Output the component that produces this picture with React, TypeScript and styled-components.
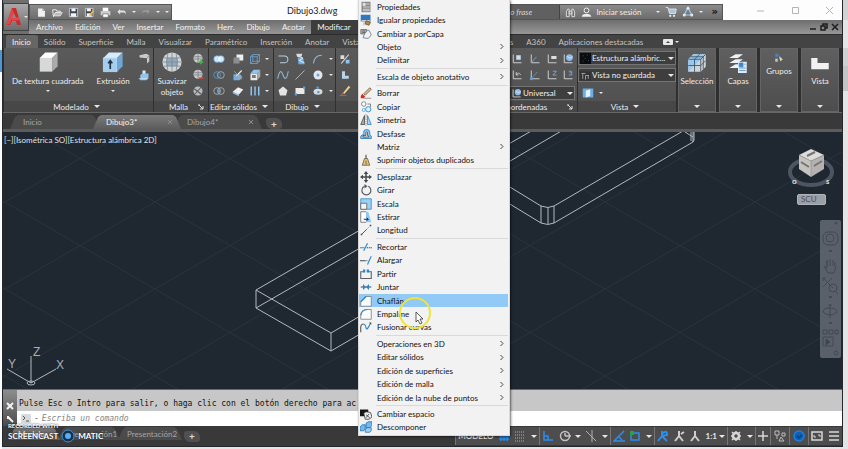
import React, { ReactNode } from "react";
import styled, { createGlobalStyle, css } from "styled-components";

const GlobalStyle = createGlobalStyle`
  * { box-sizing: border-box; }
  html, body, #root { height: 100%; }
  body {
    margin: 0;
    overflow: hidden;
    background: #ececec;
    font-family: Lato, "Open Sans", sans-serif;
    font-size: 8px;
    line-height: 10px;
    color: #dcdcdc;
  }
  button, input, select {
    font: inherit;
    color: inherit;
    margin: 0;
    padding: 0;
    border: 0;
    background: none;
  }
`;

/* ---------- icons ---------- */

const B = "#8cc4f2";
const W = "#e9ecef";
const K = "#3f4144";

const glyphs: Record<string, ReactNode> = {
  newFile: <><path d="M3 2h7l3 3v9H3z" fill="#f2f2f2" /><path d="M10 2v3h3" fill="none" stroke="#777" /></>,
  open: <><path d="M1 4h5l1 2h5v2H5l-3 6z" fill="none" stroke={W} strokeWidth="1.4" /><path d="M5 8h10l-3 5H2z" fill="#bbb" stroke={W} /></>,
  save: <><path d="M2 2h12v12H2z" fill="#3c4650" stroke={W} /><path d="M5 2h6v4H5zM4 9h8v5H4z" fill="#f4f4f4" /></>,
  saveAs: <><path d="M2 2h11v12H2z" fill="#3c4650" stroke={W} /><path d="M4 2h6v4H4zM4 9h7v5H4z" fill="#f4f4f4" /><path d="M8 11l5-7 2 2-5 6-3 1z" fill="#e9b44c" /></>,
  plot: <><path d="M4 1h8v5H4z" fill="#fff" /><path d="M1 6h14v6H1z" fill="#cfd2d4" /><path d="M4 10h8v5H4z" fill="#fff" stroke="#666" /></>,
  undo: <path d="M6 3L2 7l4 4V8h5c2 0 3 1 3 4 1-5-1-7-4-7H6z" fill="#e2e2e2" />,
  redo: <path d="M10 3l4 4-4 4V8H5c-2 0-3 1-3 4-1-5 1-7 4-7h4z" fill="#999" />,
  box: <><path d="M2 5l4-4h9l-4 4z" fill="#fff" /><path d="M2 5h9v10H2z" fill="#d7d8d9" /><path d="M11 5l4-4v10l-4 4z" fill="#a9abad" /></>,
  extrude: <><path d="M1 5l4-4h10l-4 4z" fill="#d8ebfa" /><path d="M1 5h10v10H1z" fill="#a4cdee" stroke="#cfe6f8" strokeWidth=".5" /><path d="M11 5l4-4v10l-4 4z" fill="#6ea6d4" /><path d="M6 13V7M4.500 9L6 7l1.500 2" fill="none" stroke="#1e3446" strokeWidth="1.200" /></>,
  polysolid: <><path d="M2 3l9-2 4 2v8l-3 3V7L2 6z" fill="#c8cacc" /><path d="M12 7l3-4" stroke="#777" /></>,
  presspull: <><path d="M6 2h4v5H6z" fill="#e8e8e8" /><path d="M3 8l3-2h8v6l-3 3H3z" fill={B} /><path d="M1 13h12" stroke="#e8e8e8" /></>,
  globe: <><circle cx="8" cy="8" r="7" fill="#d3d6d9" /><path d="M4 5h8v6H4z" fill="#8fa9be" /><path d="M1 8h14M2 5h12M2 11h12M8 1v14M5 2q-2 6 0 12M11 2q2 6 0 12" stroke="#7d8890" strokeWidth=".6" fill="none" /></>,
  meshAdd: <><circle cx="8" cy="7" r="6" fill="#c9cccf" /><path d="M2 5h12M2 8h12M8 1v12" stroke="#777" /><path d="M9 12h6M12 9v6" stroke="#43b649" strokeWidth="2" /></>,
  meshDel: <><circle cx="8" cy="7" r="6" fill="#c9cccf" /><path d="M2 5h12M2 8h12M8 1v12" stroke="#777" /><path d="M9 12h6" stroke="#e2483d" strokeWidth="2" /></>,
  meshEdit: <><circle cx="8" cy="8" r="6" fill="#b9bcbf" /><path d="M3 13L13 2M3 5l9 7" stroke="#595959" strokeWidth="1.400" /></>,
  union: <><circle cx="5.500" cy="8" r="4.500" fill="#d4e9fa" stroke="#5aa0dc" /><circle cx="10.500" cy="8" r="4.500" fill="#d4e9fa" stroke="#5aa0dc" /><path d="M6 5h4v6H6z" fill="#eef6fd" /></>,
  subtract: <><circle cx="10.500" cy="8" r="4.500" fill="none" stroke="#b8bcc0" /><circle cx="5.500" cy="8" r="4.500" fill="none" stroke="#5aa0dc" /><path d="M7 4a5 5 0 000 8" fill="#5aa0dc" /></>,
  intersect: <><circle cx="5.500" cy="8" r="4.500" fill="none" stroke="#b8bcc0" /><circle cx="10.500" cy="8" r="4.500" fill="none" stroke="#b8bcc0" /><path d="M8 4.500q3 3.500 0 7q-3-3.500 0-7" fill="#5aa0dc" /></>,
  sheets: <><path d="M6 2h9v8H6z" fill="#f0f0f0" /><path d="M2 6h8v8H2z" fill="#8b8e91" /></>,
  slice: <><path d="M2 7h9l3 4-4 4H2z" fill="#79aede" /><path d="M13 2L6 9" stroke="#eee" strokeWidth="1.500" /><path d="M3 3l10 11" stroke="#d6b36a" /></>,
  thick: <><path d="M1 9l7-6 7 3-6 7z" fill="#eee" /><path d="M1 9l8 4v2l-8-4z" fill={B} /></>,
  wireBox: <path d="M2 5h9v9H2zM5 2h9v9M2 5l3-3M11 5l3-3M11 14l3-3M5 2v9h9M2 14l3-3" fill="none" stroke="#6ea9dd" />,
  faceBox: <><path d="M2 6h9v9H2z" fill="#e9e9e9" /><path d="M2 6l4-5h9l-4 5z" fill={B} /><path d="M4 8h5v4H4z" fill="#777" /><path d="M11 6l4-5v9l-4 5z" fill="#aaa" /></>,
  bars: <path d="M3 2v12M8 2v12M13 2v12" stroke={B} strokeWidth="2" />,
  polyline: <path d="M2 4h8a4 4 0 010 9H4" fill="none" stroke="#b9cfe2" strokeWidth="1.400" />,
  helix: <><path d="M3 1h8l-1 4H4z" fill="#dcdcdc" /><path d="M5 6h7l2 9H6z" fill="#74aee0" /><path d="M5 4l7 3-5 3 7 3" fill="none" stroke="#fff" /></>,
  arc: <path d="M2 14Q3 3 13 3" fill="none" stroke="#8fb9de" strokeWidth="1.400" />,
  spline: <path d="M1 13Q4-3 8 8T15 3" fill="none" stroke="#8fb9de" strokeWidth="1.400" />,
  line: <path d="M2 14L14 2" stroke="#b8bcc0" strokeWidth="1.200" />,
  circle: <><circle cx="8" cy="8" r="6" fill="#e4e7ea" /><circle cx="8" cy="8" r="2" fill="#6ea9dd" /></>,
  polygon: <path d="M8 2l6 5-2 7H4L2 7z" fill="#e4e4e4" />,
  rect: <><path d="M2 4h12v8H2z" fill="#e9e9e9" /><path d="M1 11h3v3H1zM12 2h3v3h-3z" fill="#5aa0dc" /></>,
  ellipse: <><ellipse cx="8" cy="9" rx="6" ry="4" fill="#d8dadc" /><path d="M6 2h3v3H6zM7 8h3v3H7z" fill="#5aa0dc" /></>,
  mod1: <><path d="M3 14L13 2" stroke="#ddd" strokeWidth="1.500" /><path d="M2 3h5v5H2z" fill="#ddd" /><path d="M9 9h5v5H9z" fill={B} /></>,
  mod2: <path d="M4 3h4v6h5v4H4z" fill="#b9d3ea" />,
  pencil: <><path d="M5 11L13 1l2 2-8 9z" fill="#efd28a" /><path d="M1 14h9M3 13l3-3" stroke="#e2483d" strokeWidth="1.500" /></>,
  ucs1: <><path d="M3 2v11h11" fill="none" stroke="#cfcfcf" strokeWidth="1.300" /><path d="M7 3h6v6H7z" fill="#c9dff2" /></>,
  ucs2: <><path d="M3 2v11h11" fill="none" stroke="#cfcfcf" strokeWidth="1.300" /><path d="M3 13l7-8" stroke="#5aa0dc" strokeWidth="1.300" /></>,
  ucs3: <><path d="M3 2v11h11" fill="none" stroke="#cfcfcf" strokeWidth="1.300" /><path d="M7 4h7v4H7z" fill="#ddd" /></>,
  ucs4: <><path d="M3 2v11h11" fill="none" stroke="#cfcfcf" strokeWidth="1.300" /><circle cx="10" cy="6" r="4.500" fill="#8fbde6" /><path d="M7 4l3 3 4-2" stroke="#eef" fill="none" /></>,
  ucs5: <><path d="M3 2v11h11" fill="none" stroke="#cfcfcf" strokeWidth="1.300" /><path d="M7 8q3-5 6 0M7 4v4h3" fill="none" stroke="#ddd" /></>,
  ucsPoint: <><path d="M3 2v11h11" fill="none" stroke="#cfcfcf" strokeWidth="1.300" /><path d="M3 13l8-9" stroke="#5aa0dc" /><circle cx="3" cy="13" r="2" fill="#5aa0dc" /></>,
  ucsZ: <><path d="M3 2v11h11" fill="none" stroke="#cfcfcf" strokeWidth="1.300" /><path d="M9 3h5l-5 5h5" fill="none" stroke="#6ea9dd" strokeWidth="1.200" /></>,
  ucs6: <><path d="M3 2v11h11" fill="none" stroke="#cfcfcf" strokeWidth="1.300" /><path d="M9 3h4v5H9M10 5h3" fill="none" stroke="#6ea9dd" strokeWidth="1.200" /></>,
  stars: <><path d="M0 0h16v16H0z" fill="#0c0d10" /><path d="M4 4h1M10 3h1M7 8h1M12 11h1M4 12h1" stroke="#6d83a8" /></>,
  viewport: <><path d="M0 2h16v13H0z" fill="#333" /><path d="M2 5h6M4 5v8M8 8h5M8 8v6M12 8v5" stroke="#c8c8c8" fill="none" /></>,
  views: <><path d="M1 2h14v12H1z" fill="#68aee8" /><path d="M5 5l6-2v9l-6 2z" fill="#e6f2fc" /></>,
  selection: <><path d="M1 5l4-4h10v10l-4 4H1z" fill="#d2d5d8" /><path d="M1 5l4-4h10L1 15z" fill="#98c7ee" /><path d="M1 5h10v10M11 5l4-4M6 5v10M1 10h10l4-4M6 5l4-4M13 3v10M3 3h10" fill="none" stroke="#3c566c" strokeWidth=".7" /></>,
  layers: <><path d="M1 4l5-3h6L8 4zM1 8l5-3h6L8 8zM1 12l5-3h3v3z" fill="#f0f0f0" /><path d="M8 7h7v9H8z" fill="#dfeaf4" /><path d="M9 8h3v3H9zM9 12h5M9 14h5M13 9h1" fill="#3f86c8" stroke="#3f86c8" strokeWidth=".6" /></>,
  groups: <><path d="M2 1h5v5H2z" fill="#547fb5" /><path d="M2 9h4v5H2z" fill="#bfc6cc" /><path d="M7 4q7 1 4 10" fill="none" stroke="#3f7fc0" strokeWidth="1.500" /><path d="M8 5l6 5-4 3z" fill="#e8d79a" /></>,
  base: <path d="M1 4h5v4h9v5H1z" fill="#f1f1f1" />,
  binoculars: <path d="M2 14V7l2-4h2v11zM10 14V3h2l2 4v7zM6 6h4v4H6z" fill="#6c6c6c" stroke="#e4e4e4" strokeWidth="1.300" />,
  user: <><circle cx="8" cy="5" r="3.500" fill="#777" stroke="#f2f2f2" strokeWidth="1.400" /><path d="M1 14q1-4 5-4h4q4 0 5 4z" fill="#eee" /></>,
  cart: <><path d="M1 2h3l2 8h8l1-6H5" fill="#a9c6dd" stroke="#e4e4e4" strokeWidth="1.200" /><circle cx="7" cy="13" r="1.500" fill="#eee" /><circle cx="12" cy="13" r="1.500" fill="#eee" /></>,
  triangle: <><path d="M8 2l5 10H3z" fill="none" stroke="#a7cbe8" strokeWidth="1.500" /><circle cx="8" cy="3" r="2" fill="#dcebf7" /><circle cx="3" cy="12" r="2" fill="#dcebf7" /><circle cx="13" cy="12" r="2" fill="#dcebf7" /></>,
  props: <><path d="M2 1h12v14H2z" fill="#888" /><path d="M4 3h3v3H4zM8 4h5M4 8h9M4 11h9M4 13h9" stroke="#e8e8e8" fill="#ddd" /></>,
  matchProps: <><path d="M1 1h13v9H1z" fill="#2f78bd" /><path d="M2 8h11v2H2zM4 11h7v4H4z" fill="#c9cdd1" /><path d="M8 9l6 2-2 4-5-2z" fill="#b88a4f" stroke="#6b4a22" /></>,
  byLayer: <><path d="M1 2h8v6H1z" fill="#a9adb0" stroke="#666" /><path d="M10 3h2l3 6-4 5-7-1 2-5z" fill="#f2f2f2" stroke="#5c6e80" /><path d="M3 4h4M3 6h4" stroke="#555" /></>,
  erase: <><path d="M5 9L13 1l2 2-8 8z" fill="#d9c290" stroke="#61492a" /><path d="M3 9l4 4-2 2H1v-3z" fill="#cf2f28" /><path d="M5 15h10" stroke="#777" /></>,
  copy: <><circle cx="5" cy="4" r="3" fill="#fff" stroke="#66696d" /><path d="M10 4h4v4" fill="none" stroke="#66696d" /><circle cx="11" cy="11" r="3.500" fill="#dceefb" stroke="#3d96da" strokeWidth="1.300" /><circle cx="5" cy="12" r="2" fill="#fff" stroke="#3d96da" /></>,
  mirror: <><path d="M6 2v12H1z" fill="#a9adb1" stroke={K} /><path d="M10 2v12h5z" fill="#a7d4f5" stroke="#2a7fc6" /><path d="M8 0v16" stroke="#777" strokeDasharray="2 1" /></>,
  offset: <><path d="M1 14q-1-5 4-5V5q0-3 4-3t4 4v3q3 1 2 5z" fill="#8cc8f4" stroke="#1c6db3" /><path d="M4 12h8q0-2-2-2V6q0-1-1-1t-1 1v4H4z" fill="#f5f5f5" stroke="#39444d" /></>,
  overkill: <><path d="M7 1h2v6H7z" fill="#777" /><path d="M6 6h4l3 9H3z" fill="#e2c270" stroke="#5c5347" /><path d="M8 9v5" stroke="#5c5347" /></>,
  move: <path d="M8 0l3 4H9v3h3V5l4 3-4 3V9H9v3h2l-3 4-3-4h2V9H4v2L0 8l4-3v2h3V4H5z" fill="#46494d" />,
  rotate: <><path d="M11 3a6 6 0 11-5 0" fill="none" stroke="#55595d" strokeWidth="1.500" /><path d="M6 0l4 3-4 3z" fill="#55595d" /></>,
  scale: <><path d="M1 1h14v14H1z" fill="#9ed0f4" stroke="#2d84c9" /><path d="M1 7h8v8H1z" fill="#f5f5f5" stroke="#555" /></>,
  stretch: <><path d="M8 1h3l4 14H8z" fill="#8fc8f3" /><path d="M8 1H1v14h7" fill="#fff" stroke="#555" /><path d="M5 11h6M9 9l2 2-2 2" fill="none" stroke="#222" strokeWidth="1.300" /></>,
  lengthen: <><path d="M2 14l7-7" stroke={K} strokeWidth="1.200" /><path d="M9 7l5-5" stroke="#777" strokeDasharray="1.500 1.500" /><path d="M1 13h2v2H1zM13 1h2v2h-2z" fill={K} /></>,
  trim: <><path d="M0 9h6" stroke="#2d84c9" strokeWidth="1.300" /><path d="M9 9h7" stroke={K} strokeDasharray="2 1" strokeWidth="1.300" /><path d="M5 13l5-10" stroke="#2d84c9" strokeWidth="1.400" /></>,
  extend: <><path d="M0 9h7" stroke={K} strokeWidth="1.300" /><path d="M7 9h4" stroke={K} strokeDasharray="2 1" /><path d="M10 14l5-11" stroke="#2d84c9" strokeWidth="1.400" /></>,
  breakIcon: <><path d="M5 5H1v9h14V5h-4" fill="none" stroke="#5b5f63" strokeWidth="1.400" /><path d="M4 2h3v4H4zM9 2h3v4H9z" fill="#2d84c9" /></>,
  join: <><path d="M1 8h14" stroke={K} strokeWidth="1.300" /><path d="M4 4l4 4-4 4zM12 4L8 8l4 4z" fill="#2d84c9" /></>,
  chamfer: <><path d="M1 15V9l7-7h7v13z" fill="#fafafa" stroke="#707478" /><path d="M1 9l7-7" stroke="#2d84c9" strokeWidth="1.600" /></>,
  fillet: <><path d="M1 15V10q1-8 9-8h5v13z" fill="#fafafa" stroke="#707478" /><path d="M1 10q1-8 9-8" fill="none" stroke="#2d84c9" strokeWidth="1.500" /></>,
  blend: <><path d="M1 15V8q0-4 3-4" fill="none" stroke={K} strokeWidth="1.300" /><path d="M4 4q3 0 4 5t6-6" fill="none" stroke="#2d84c9" strokeWidth="1.500" /><path d="M12 2h3v3" fill={K} /></>,
  space: <><path d="M0 2h11v9H0z" fill="#161616" /><path d="M5 7l3-2 6 1 2 6-4 3H7z" fill="#eee" stroke="#333" /><path d="M8 9l5 4M12 8l-4 5" stroke="#333" /></>,
  explode: <><path d="M0 8l3-3h4v5l-2 3H0zM8 3l3-2h5v5l-3 3H8z" fill="#74b8ec" stroke="#1c6db3" /><path d="M7 11l3-2h5v4l-2 2H7z" fill="#9dd0f5" stroke="#1c6db3" /></>,
};

const IconSvg = styled.svg<{ $s: number }>`
  display: block;
  flex: none;
  width: ${(p) => p.$s}px;
  height: ${(p) => p.$s}px;
`;
const Icon = ({ name, size = 11 }: { name: string; size?: number }) => (
  <IconSvg $s={size} viewBox="0 0 16 16" aria-hidden="true">{glyphs[name]}</IconSvg>
);

const Caret = styled.i`
  flex: none;
  width: 0;
  height: 0;
  border: 3px solid transparent;
  border-top-color: #e8e8e8;
  border-bottom-width: 0;
`;
const SmallCaret = styled(Caret)`
  border-width: 2px 2px 0;
`;

/* ---------- frame ---------- */

const Desktop = styled.div`
  display: flex;
  height: 100vh;
  padding: 0 5px 2px 2px;
  background: linear-gradient(#fbfbfb 50px, #4f97d4 50px 72px, #fbfbfb 72px) left / 2px 100% no-repeat,
    linear-gradient(#d2d2d2 20px, #e4e4e4 20px 48px, #d0d0d0 48px 66px, #c4c4c4 66px 91px, #e4e4e4 91px);
`;
const Window = styled.main`
  position: relative;
  flex: 1;
  min-width: 0;
  display: flex;
  flex-direction: column;
  border: solid #24272b;
  border-width: 0 1px 1px;
  background: #3a3a3a;
`;

/* ---------- header ---------- */

const Header = styled.header`
  display: grid;
  grid-template-columns: 26px minmax(0, 1fr);
  grid-template-rows: 20px 14px;
  border-bottom: 1px solid #2c2c2c;
  background: #6f6f6f;
`;
const AppButton = styled.button`
  grid-row: 1 / 3;
  display: flex;
  align-items: center;
  justify-content: center;
  gap: 2px;
  margin-top: 3px;
  height: 28px;
  border: 1px solid #444;
  background: linear-gradient(#a9a9a9, #6c6c6c);
`;
const AppLogo = styled.svg`
  width: 17px;
  height: 20px;
`;
const TitleBar = styled.div`
  display: flex;
  align-items: center;
  background: #fdfdfd;
  color: #333;
  padding-top: 4px;
`;
const barFace = css`
  display: flex;
  align-items: center;
  height: 16px;
  background: linear-gradient(#8b8b8b, #6c6c6c);
  color: #ececec;
`;
const QuickAccess = styled.div`
  ${barFace}
  width: 143px;
  gap: 5px;
  padding: 0 4px 0 6px;
  border: 1px solid #555;
`;
const PlainButton = styled.button`
  display: flex;
  align-items: center;
  justify-content: center;
  gap: 2px;
`;
const Title = styled.h1`
  flex: 1;
  margin: 0;
  padding: 0 0 2px 115px;
  font-size: 9px;
  line-height: 10px;
  font-weight: 400;
  color: #222;
`;
const InfoCenter = styled.div`
  ${barFace}
  gap: 5px;
  padding-right: 4px;
  border: 1px solid #555;
`;
const Search = styled.input`
  width: 138px;
  height: 14px;
  padding-right: 27px;
  border-right: 1px solid #444;
  background: #606060;
  font-style: italic;
  text-align: right;
  &::placeholder { color: #d2d2d2; }
`;
const SignIn = styled(PlainButton)`
  gap: 4px;
  padding-right: 9px;
`;
const More = styled(PlainButton)`
  font-family: "DejaVu Sans", sans-serif;
  font-size: 10px;
  font-weight: 700;
  color: #111;
  padding-left: 4px;
`;
const WindowButtons = styled.div`
  display: flex;
  width: 119px;
  padding: 0 8px 4px 33px;
  justify-content: space-between;
`;
const WinIcon = styled.svg`
  display: block;
  width: 9px;
  height: 9px;
  fill: none;
  stroke: #b4b4b4;
`;
const MenuBar = styled.nav`
  display: flex;
  align-items: stretch;
  padding-left: 1px;
  background: linear-gradient(#6e6e6e, #979797);
`;
const MenuButton = styled.button<{ $on?: boolean }>`
  padding: 0 ${(p) => (p.$on ? 40 : 6)}px 0 6px;
  color: #f2f2f2;
  background: ${(p) => (p.$on ? "#3d3d3d" : "none")};
`;
const DocButtons = styled.div`
  display: flex;
  align-items: center;
  gap: 3px;
  margin-left: auto;
  padding-right: 3px;
`;
const DocIcon = styled.svg`
  display: block;
  width: 8px;
  height: 8px;
  fill: none;
  stroke: #1e1e1e;
  stroke-width: 1.5px;
`;

/* ---------- ribbon ---------- */

const RibbonTabs = styled.nav`
  display: flex;
  align-items: stretch;
  height: 13px;
  padding-left: 3px;
  background: #434343;
`;
const RibbonTab = styled.button<{ $on?: boolean }>`
  padding: 0 7px 0 6px;
  white-space: nowrap;
  color: ${(p) => (p.$on ? "#f2f2f2" : "#c4c4c4")};
  background: ${(p) => (p.$on ? "#666" : "none")};
  border-radius: 2px 2px 0 0;
`;
const RibbonToggle = styled(PlainButton)`
  margin-left: 13px;
`;
const ToggleIcon = styled.svg`
  width: 10px;
  height: 6px;
`;
const Ribbon = styled.section`
  display: flex;
  align-items: stretch;
  height: 65px;
  padding: 0 3px 0 1px;
  background: #2f2f2f;
  border-bottom: 1px solid #666;
  gap: 1px;
`;
const Panel = styled.section<{ $w?: number }>`
  ${(p) => (p.$w ? `flex: none; width: ${p.$w}px;` : "flex: 1; min-width: 0;")}
  display: flex;
  flex-direction: column;
  background: linear-gradient(#5a5a5a, #505050);
`;
const PanelBody = styled.div<{ $pad?: string }>`
  flex: 1;
  display: flex;
  align-items: flex-start;
  padding: ${(p) => p.$pad || "3px 0 0"};
`;
const PanelFooter = styled.button<{ $left?: number }>`
  display: flex;
  align-items: center;
  justify-content: ${(p) => (p.$left ? "flex-start" : "center")};
  gap: 5px;
  height: 11px;
  padding: 0 4px 0 ${(p) => p.$left || 0}px;
  background: #474747;
  color: #ececec;
  white-space: nowrap;
`;
const Launcher = styled.svg`
  width: 6px;
  height: 6px;
  margin-left: auto;
  stroke: #e2e2e2;
  fill: none;
`;
const BigButton = styled.button<{ $w: number }>`
  display: flex;
  flex-direction: column;
  align-items: center;
  width: ${(p) => p.$w}px;
  white-space: nowrap;
  color: #ececec;
  line-height: 11px;
  gap: 3px;
`;
const IconGrid = styled.div<{ $cols: string }>`
  display: grid;
  grid-template-columns: ${(p) => p.$cols};
  grid-auto-rows: 16px;
  align-items: center;
  justify-items: center;
`;
const TallPanels = styled.div`
  display: flex;
  gap: 3px;
  padding-left: 1px;
`;
const TallPanel = styled.button`
  width: 38px;
  display: flex;
  flex-direction: column;
  align-items: center;
  gap: 3px;
  padding: 4px 0 3px;
  border: 1px solid #646464;
  background: linear-gradient(#5f5f5f, #4d4d4d);
  color: #ececec;
  & > i { margin-top: auto; }
`;
const Stack = styled.div`
  display: flex;
  flex-direction: column;
  gap: 3px;
  width: 100%;
`;
const Combo = styled.label`
  display: flex;
  align-items: center;
  gap: 1px;
  height: 14px;
  padding: 0 1px;
  border: 1px solid #747474;
  background: #3e3e3e;
  color: #f0f0f0;
`;
const Select = styled.select`
  appearance: none;
  flex: 1;
  min-width: 0;
  outline: 0;
  height: 12px;
`;

/* ---------- file tabs ---------- */

const FileTabs = styled.nav`
  display: flex;
  align-items: flex-end;
  height: 19px;
  padding-left: 7px;
  border-bottom: 3px solid #5c5c5c;
  background: #393939;
`;
const FileTab = styled.button<{ $w: number; $on?: boolean }>`
  display: flex;
  align-items: center;
  justify-content: space-between;
  position: relative;
  z-index: ${(p) => (p.$on ? 1 : 0)};
  width: ${(p) => p.$w}px;
  height: 14px;
  margin-right: -7px;
  padding: 0 8px 0 13px;
  text-align: left;
  color: ${(p) => (p.$on ? "#f4f4f4" : "#a5a5a5")};
  background: ${(p) => (p.$on ? "linear-gradient(#7a7a7a, #5c5c5c)" : "#4b4b4b")};
  clip-path: polygon(0 100%, 5px 15%, 8px 0, calc(100% - 8px) 0, calc(100% - 5px) 15%, 100% 100%);
`;
const CloseMark = styled.svg`
  width: 6px;
  height: 6px;
  stroke: #8d8d8d;
`;
const AddTab = styled.button<{ $gap: number }>`
  width: 16px;
  height: 11px;
  margin-left: ${(p) => p.$gap}px;
  border-radius: 3px 6px;
  background: #505050;
  color: #ddd;
  font-weight: 700;
  font-size: 10px;
  line-height: 10px;
`;

/* ---------- drawing ---------- */

const Viewport = styled.section`
  position: relative;
  flex: 1;
  min-height: 0;
  background: #1f2731;
  overflow: hidden;
`;
const Drawing = styled.svg`
  display: block;
  width: 100%;
  height: 100%;
  font-family: "Liberation Sans", sans-serif;
  font-size: 12px;
`;
const ViewLabel = styled.button`
  position: absolute;
  left: 1px;
  top: 3px;
  color: #e0e2e4;
`;
const ViewCube = styled.svg`
  position: absolute;
  right: 6px;
  top: 14px;
  width: 50px;
  height: 42px;
  font-family: "Open Sans", sans-serif;
  font-size: 6px;
  font-weight: 700;
`;
const ScuButton = styled.button`
  position: absolute;
  right: 16px;
  top: 62px;
  width: 29px;
  height: 11px;
  padding-left: 3px;
  border-radius: 2px;
  border: 1px solid #b0b4ba;
  background: #9a9ea6;
  color: #4c535c;
  font-size: 8px;
  line-height: 9px;
  text-align: left;
`;
const NavBar = styled.nav`
  position: absolute;
  right: 1px;
  top: 88px;
  width: 21px;
  height: 138px;
  border-radius: 2px;
  background: #5a6069;
`;
const NavDrawing = styled.svg`
  width: 21px;
  height: 138px;
  fill: none;
  stroke: #424953;
`;

/* ---------- command line and status ---------- */

const CommandArea = styled.section`
  display: grid;
  grid-template-columns: 14px minmax(0, 1fr);
  border-top: 1px solid #6a6a6a;
  font-family: "DejaVu Sans Mono", monospace;
`;
const Grip = styled.div`
  grid-row: 1 / 3;
  display: flex;
  flex-direction: column;
  align-items: center;
  justify-content: space-between;
  padding: 12px 0 3px;
  background: linear-gradient(#8d8d8d, #4c4c4c);
`;
const GripIcon = styled.svg`
  width: 8px;
  height: 8px;
  fill: none;
  stroke: #f2f2f2;
  stroke-width: 2px;
`;
const History = styled.output`
  height: 21px;
  padding: 9px 2px 0;
  overflow: hidden;
  white-space: nowrap;
  background: #c7c7c7;
  color: #111;
`;
const Prompt = styled.label`
  display: flex;
  align-items: center;
  gap: 3px;
  height: 15px;
  padding-left: 4px;
  background: #fff;
  color: #555;
`;
const PromptIcon = styled.svg`
  width: 10px;
  height: 9px;
  fill: #d8dbde;
  stroke: #555;
`;
const CommandInput = styled.input`
  flex: 1;
  font-style: italic;
  outline: 0;
  &::placeholder { color: #868686; }
`;
const StatusBar = styled.footer`
  display: flex;
  align-items: center;
  height: 20px;
  padding-left: 6px;
  background: #393939;
`;
const LayoutTab = styled(FileTab)`
  padding: 0 0 0 9px;
  margin-right: -2px;
  height: 13px;
  margin-bottom: 5px;
`;
const StatusTools = styled.div`
  display: flex;
  align-items: stretch;
  height: 18px;
  margin-left: auto;
  background: #4d4d4d;
`;
const ToolGroup = styled.div<{ $w: number }>`
  display: flex;
  align-items: center;
  justify-content: space-around;
  width: ${(p) => p.$w}px;
  border-left: 1px solid #757575;
  color: #e6e6e6;
`;
const ModelButton = styled(PlainButton)`
  font-weight: 700;
`;
const ToolSvg = styled.svg<{ $c: string }>`
  display: block;
  width: 12px;
  height: 12px;
  fill: none;
  stroke: ${(p) => p.$c};
  stroke-width: 1.5px;
`;

/* ---------- overlays ---------- */

const Popup = styled.div`
  position: absolute;
  z-index: 2;
  left: 356px;
  top: 0;
  bottom: 11px;
  width: 150px;
  display: flex;
  flex-direction: column;
  padding: 0 1px 1px 0;
  background: #f2f2f2;
  box-shadow: 0 0 0 1px #d8d8d8, 1px 1px 3px #000;
  color: #111;
`;
const Item = styled.button<{ $on?: boolean }>`
  flex: 1;
  min-height: 0;
  display: grid;
  grid-template-columns: 15px minmax(0, 1fr) 8px;
  column-gap: 2px;
  align-items: center;
  padding-left: 1px;
  text-align: left;
  white-space: nowrap;
  background: ${(p) => (p.$on ? "#91c9f7" : "none")};
`;
const Divider = styled.hr`
  flex: none;
  width: calc(100% - 17px);
  height: 1px;
  margin: 1px 0 1px 17px;
  border: 0;
  background: #d9d9d9;
`;
const Chevron = styled.svg`
  width: 4px;
  height: 7px;
  fill: none;
  stroke: #444;
`;
const Pointer = styled.svg`
  position: absolute;
  z-index: 3;
  left: 395px;
  top: 296px;
  width: 34px;
  height: 34px;
  pointer-events: none;
`;
const Watermark = styled.div`
  position: absolute;
  z-index: 3;
  left: 5px;
  bottom: 3px;
  color: #fff;
  font-weight: 700;
  font-size: 8px;
  line-height: 14px;
  text-shadow: 0 0 2px #000;
`;
const Recorded = styled.div`
  font-size: 6px;
  line-height: 6px;
`;
const Brand = styled.div`
  display: flex;
  align-items: center;
  gap: 2px;
`;
const BrandDot = styled.svg`
  width: 16px;
  height: 14px;
`;

type Entry = [string, string?, ("sub" | "on")?];
const popup: Entry[][] = [
  [["Propiedades", "props"], ["Igualar propiedades", "matchProps"], ["Cambiar a porCapa", "byLayer"], ["Objeto", "", "sub"], ["Delimitar", "", "sub"]],
  [["Escala de objeto anotativo", "", "sub"]],
  [["Borrar", "erase"], ["Copiar", "copy"], ["Simetría", "mirror"], ["Desfase", "offset"], ["Matriz", "", "sub"], ["Suprimir objetos duplicados", "overkill"]],
  [["Desplazar", "move"], ["Girar", "rotate"], ["Escala", "scale"], ["Estirar", "stretch"], ["Longitud", "lengthen"]],
  [["Recortar", "trim"], ["Alargar", "extend"], ["Partir", "breakIcon"], ["Juntar", "join"], ["Chaflán", "chamfer", "on"], ["Empalme", "fillet"], ["Fusionar curvas", "blend"]],
  [["Operaciones en 3D", "", "sub"], ["Editar sólidos", "", "sub"], ["Edición de superficies", "", "sub"], ["Edición de malla", "", "sub"], ["Edición de la nube de puntos", "", "sub"]],
  [["Cambiar espacio", "space"], ["Descomponer", "explode"]],
];

const Tools = ({ cols, names }: { cols: string; names: string[] }) => (
  <IconGrid $cols={cols}>
    {names.map((n) =>
      n.startsWith("v") && n.length === 2
        ? <SmallCaret key={n} />
        : <PlainButton key={n} aria-label={n}><Icon name={n} size={12} /></PlainButton>
    )}
  </IconGrid>
);

const LaunchMark = () => <Launcher viewBox="0 0 6 6"><path d="M0 1h2M1 1l4 4M5 2v3H2" /></Launcher>;

const ModifyMenu = () => (
  <Popup role="menu">
    {popup.map((group, g) => (
      <React.Fragment key={g}>
        {g > 0 && <Divider />}
        {group.map(([text, icon, kind]) => (
          <Item key={text} role="menuitem" $on={kind === "on"}>
            {icon ? <Icon name={icon} size={12} /> : <span />}
            <span>{text}</span>
            {kind === "sub" && <Chevron viewBox="0 0 4 7"><path d="M.5 1L3 3.500.5 6" /></Chevron>}
          </Item>
        ))}
      </React.Fragment>
    ))}
  </Popup>
);

const Scene = () => (
  <Drawing>
    <defs>
      <pattern id="grid" width="150" height="87" x="152" y="70" patternUnits="userSpaceOnUse">
        <path d="M0 0L150 87M0 87L150 0" stroke="#29313b" fill="none" />
      </pattern>
    </defs>
    <rect width="100%" height="100%" fill="url(#grid)" />
    <g transform="translate(-3 -132)" fill="none" stroke="#b4b9be">
      <path d="M256 290v18l75 43v-18l-75-43L400 207M256 308L400 225M331 333l60-35M331 351l60-35" />
      <path d="M500 149l33-19M500 167l63-37M500 181l41 25M500 198l41 25M541 206v17M548 207v17M554 206v17M541 206q7 3 13 0L683 131M541 223q7 3 13 0L693 142v-10M691 132v9M685 132l8 5M693 142l1-2v-8" />
      <path d="M31 356v27L7 369M31 383l25-14" />
      <ellipse cx="31" cy="383" rx="4" ry="2" />
    </g>
    <g fill="#aab0b6">
      <text x="30" y="224">Z</text>
      <text x="5" y="236">Y</text>
      <text x="53" y="237">X</text>
    </g>
  </Drawing>
);

export default function App() {
  return (
    <>
      <GlobalStyle />
      <Desktop>
        <Window>
          <Header>
            <AppButton aria-label="Menú de la aplicación">
              <AppLogo viewBox="0 0 17 20">
                <path d="M1 18L7 1h4l5 17h-4l-1-4H7l-2 4z" fill="#c92a2c" />
                <path d="M7 1L1 18l4-1L9 6zM7 11l7-1 1 3-8 1z" fill="#e2474a" />
                <path d="M9 6l2 5H7z" fill="#8b8b8b" />
              </AppLogo>
              <SmallCaret />
            </AppButton>
            <TitleBar>
              <QuickAccess>
                {["newFile", "open", "save", "saveAs", "plot", "undo"].map((n) => (
                  <PlainButton key={n} aria-label={n}><Icon name={n} /></PlainButton>
                ))}
                <SmallCaret />
                <PlainButton aria-label="redo"><Icon name="redo" size={10} /></PlainButton>
                <SmallCaret />
                <SmallCaret />
              </QuickAccess>
              <Title>Dibujo3.dwg</Title>
              <InfoCenter>
                <Search aria-label="Buscar" placeholder="Escriba palabra clave o frase" />
                <PlainButton aria-label="Buscar"><Icon name="binoculars" /></PlainButton>
                <SignIn><Icon name="user" /> Iniciar sesión</SignIn>
                <SmallCaret />
                <PlainButton aria-label="Tienda"><Icon name="cart" size={12} /></PlainButton>
                <PlainButton aria-label="Conexión"><Icon name="triangle" size={12} /></PlainButton>
                <SmallCaret />
                <More>»</More>
              </InfoCenter>
              <WindowButtons>
                <PlainButton aria-label="Minimizar"><WinIcon viewBox="0 0 9 9"><path d="M1 5h7" /></WinIcon></PlainButton>
                <PlainButton aria-label="Maximizar"><WinIcon viewBox="0 0 9 9"><path d="M1.500 1.500h6v6h-6z" /></WinIcon></PlainButton>
                <PlainButton aria-label="Cerrar"><WinIcon viewBox="0 0 9 9"><path d="M1 1l7 7M8 1L1 8" /></WinIcon></PlainButton>
              </WindowButtons>
            </TitleBar>
            <MenuBar>
              {["Archivo", "Edición", "Ver", "Insertar", "Formato", "Herr.", "Dibujo", "Acotar"].map((m) => (
                <MenuButton key={m}>{m}</MenuButton>
              ))}
              <MenuButton $on>Modificar</MenuButton>
              <DocButtons>
                <PlainButton aria-label="Minimizar dibujo"><DocIcon viewBox="0 0 8 8"><path d="M1 6h6" /></DocIcon></PlainButton>
                <PlainButton aria-label="Restaurar dibujo"><DocIcon viewBox="0 0 8 8"><path d="M1 3h4v4H1zM3 3V1h4v4H5" /></DocIcon></PlainButton>
                <PlainButton aria-label="Cerrar dibujo"><DocIcon viewBox="0 0 8 8"><path d="M1 1l6 6M7 1L1 7" /></DocIcon></PlainButton>
              </DocButtons>
            </MenuBar>
          </Header>

          <RibbonTabs>
            {["Inicio", "Sólido", "Superficie", "Malla", "Visualizar", "Paramétrico", "Inserción", "Anotar", "Vista", "Administrar", "Salida", "Complementos", "A360", "Aplicaciones destacadas"].map((t, i) => (
              <RibbonTab key={t} $on={i === 0}>{t}</RibbonTab>
            ))}
            <RibbonToggle aria-label="Minimizar cinta">
              <ToggleIcon viewBox="0 0 10 6"><rect width="10" height="6" rx="1" fill="#e8e8e8" /><path d="M5 2l2 2H3z" fill="#444" /></ToggleIcon>
              <SmallCaret />
            </RibbonToggle>
          </RibbonTabs>

          <Ribbon>
            <Panel $w={149}>
              <PanelBody>
                <BigButton $w={88}><Icon name="box" size={22} />De textura cuadrada<SmallCaret /></BigButton>
                <BigButton $w={44}><Icon name="extrude" size={22} />Extrusión<SmallCaret /></BigButton>
                <Tools cols="18px" names={["polysolid", "presspull"]} />
              </PanelBody>
              <PanelFooter>Modelado <Caret /></PanelFooter>
            </Panel>
            <Panel $w={54}>
              <PanelBody>
                <BigButton $w={36}><Icon name="globe" size={22} /><span>Suavizar<br />objeto</span></BigButton>
                <Tools cols="16px" names={["meshAdd", "meshDel", "meshEdit"]} />
              </PanelBody>
              <PanelFooter $left={15}>Malla <LaunchMark /></PanelFooter>
            </Panel>
            <Panel $w={64}>
              <PanelBody>
                <Tools cols="20px 17px 17px 8px" names={["union", "sheets", "wireBox", "v1", "subtract", "slice", "faceBox", "v2", "intersect", "thick", "bars", "v3"]} />
              </PanelBody>
              <PanelFooter>Editar sólidos <Caret /></PanelFooter>
            </Panel>
            <Panel $w={61}>
              <PanelBody>
                <Tools cols="18px 16px 20px 6px" names={["polyline", "helix", "arc", "v1", "spline", "line", "circle", "v2", "polygon", "rect", "ellipse", "v3"]} />
              </PanelBody>
              <PanelFooter>Dibujo <Caret /></PanelFooter>
            </Panel>
            <Panel>
              <PanelBody>
                <Tools cols="18px" names={["mod1", "mod2", "pencil"]} />
              </PanelBody>
              <PanelFooter aria-label="Modificar" />
            </Panel>
            <Panel $w={80}>
              <PanelBody $pad="3px 2px 0 12px">
                <Stack>
                  <Tools cols="16px 19px 16px 15px" names={["ucs1", "ucs2", "ucs3", "ucs4", "ucs5", "ucsPoint", "ucsZ", "ucs6"]} />
                  <Combo>
                    <Icon name="ucs4" />
                    <Select aria-label="SCP"><option>Universal</option></Select>
                    <Caret />
                  </Combo>
                </Stack>
              </PanelBody>
              <PanelFooter $left={4}>Coordenadas <LaunchMark /></PanelFooter>
            </Panel>
            <Panel $w={98}>
              <PanelBody $pad="3px 0 0">
                <Stack>
                  <Combo>
                    <Icon name="stars" />
                    <Select aria-label="Estilo visual"><option>Estructura alámbric...</option></Select>
                    <Caret />
                  </Combo>
                  <Combo>
                    <Icon name="viewport" />
                    <Select aria-label="Vista"><option>Vista no guardada</option></Select>
                    <Caret />
                  </Combo>
                  <IconGrid $cols="20px 6px">
                    <PlainButton aria-label="Ventanas gráficas"><Icon name="views" size={12} /></PlainButton>
                    <SmallCaret />
                  </IconGrid>
                </Stack>
              </PanelBody>
              <PanelFooter>Vista <Caret /></PanelFooter>
            </Panel>
            <TallPanels>
              <TallPanel><Icon name="selection" size={20} />Selección<Caret /></TallPanel>
              <TallPanel><Icon name="layers" size={20} />Capas<Caret /></TallPanel>
              <TallPanel><Icon name="groups" size={10} />Grupos<Caret /></TallPanel>
              <TallPanel><Icon name="base" size={20} />Vista<Caret /></TallPanel>
            </TallPanels>
          </Ribbon>

          <FileTabs>
            <FileTab $w={90}>Inicio</FileTab>
            <FileTab $w={88} $on>Dibujo3*<CloseMark viewBox="0 0 6 6"><path d="M1 1l4 4M5 1L1 5" /></CloseMark></FileTab>
            <FileTab $w={88}>Dibujo4*<CloseMark viewBox="0 0 6 6"><path d="M1 1l4 4M5 1L1 5" /></CloseMark></FileTab>
            <AddTab $gap={11} aria-label="Nuevo dibujo">+</AddTab>
          </FileTabs>

          <Viewport>
            <Scene />
            <ViewLabel>[−][Isométrica SO][Estructura alámbrica 2D]</ViewLabel>
            <ViewCube viewBox="786 146 50 42">
              <ellipse cx="811" cy="172" rx="21" ry="13" fill="none" stroke="#4d5560" strokeWidth="4" />
              <path d="M811 149l13 6-13 6-12-6z" fill="#dcdcda" />
              <path d="M799 155l12 6v16l-12-8z" fill="#c4c3c1" />
              <path d="M824 155l-13 6v16l13-8z" fill="#b3b2b0" />
              <path d="M807 156l8-4M801 162l8 5M814 166l8-5" stroke="#77746f" strokeWidth="2" />
              <path d="M799 155l12 6 13-6M811 161v16" fill="none" stroke="#8d8b88" strokeWidth=".6" />
              <text x="792" y="184" fill="#e2e4e6">O</text>
              <text x="826" y="184" fill="#e2e4e6">S</text>
            </ViewCube>
            <ScuButton>SCU</ScuButton>
            <NavBar aria-label="Barra de navegación">
              <NavDrawing viewBox="0 0 21 138">
                <circle cx="16" cy="3" r="1" />
                <rect x="3" y="12" width="15" height="13" rx="5" />
                <circle cx="10" cy="18" r="4" />
                <path d="M9 31h3M9 77h3M9 103h3" strokeWidth="2" />
                <path d="M4 46l3 2V41M7 46v-6M10 46v-7M13 46v-6M15 47v-5M4 46l4 7h6l2-6" />
                <path d="M3 58l10 10M12 58L3 67M3 61v-3h3" />
                <circle cx="13" cy="68" r="4" />
                <path d="M15 71l3 3M10 84v14M3 92q0-4 7-4t7 4q-3 3-7 3t-7-3M8 86l2-2 2 2" />
                <path d="M3 110h4v4H3zM9 110h4v4H9zM15 110h3v4h-3zM3 117h10v9H3z" />
                <path d="M6 119l4 3-4 3z" fill="#3d444e" />
                <circle cx="16" cy="133" r="2" />
              </NavDrawing>
            </NavBar>
          </Viewport>

          <CommandArea>
            <Grip>
              <GripIcon viewBox="0 0 8 8"><path d="M1 1l6 6M7 1L1 7" /></GripIcon>
              <GripIcon viewBox="0 0 8 8"><path d="M2 1v2h2M3 3l4 4" /></GripIcon>
            </Grip>
            <History>Pulse Esc o Intro para salir, o haga clic con el botón derecho para ac</History>
            <Prompt>
              <PromptIcon viewBox="0 0 10 9"><rect width="10" height="9" rx="1" stroke="none" /><path d="M2 2l2 2-2 2M5 7h3" fill="none" /></PromptIcon>
              <span>-</span>
              <CommandInput aria-label="Comando" placeholder="Escriba un comando" />
            </Prompt>
          </CommandArea>

          <StatusBar>
            <LayoutTab $w={51} $on>Modelo</LayoutTab>
            <LayoutTab $w={62}>Presentación1</LayoutTab>
            <LayoutTab $w={64}>Presentación2</LayoutTab>
            <AddTab $gap={4} aria-label="Nueva presentación">+</AddTab>
            <StatusTools>
              <ToolGroup $w={84}>
                <ModelButton>MODELO</ModelButton>
                <ToolSvg $c="#2a8df0" viewBox="0 0 12 12"><path d="M1 3h10M1 6h10M1 9h10M3 1v10M6 1v10M9 1v10" /></ToolSvg>
                <ToolSvg $c="#8d8d8d" viewBox="0 0 12 12"><path d="M1 2h10M1 5h10M1 8h10M1 11h10" strokeDasharray="1 1" /></ToolSvg>
                <Caret />
              </ToolGroup>
              <ToolGroup $w={71}>
                <ToolSvg $c="#2a8df0" viewBox="0 0 12 12"><path d="M2 1v9h9M2 6h4v4" /></ToolSvg>
                <ToolSvg $c="#c4c4c4" viewBox="0 0 12 12"><circle cx="6" cy="6" r="4.500" /><path d="M6 6h6M6 6V3" /></ToolSvg>
                <Caret />
                <ToolSvg $c="#b4b4b4" viewBox="0 0 12 12"><path d="M1 1l10 10M7 0v12" strokeWidth="1" /></ToolSvg>
                <Caret />
              </ToolGroup>
              <ToolGroup $w={44}>
                <ToolSvg $c="#2a8df0" viewBox="0 0 12 12"><path d="M11 1L1 11h11M6 7l3 3" /></ToolSvg>
                <ToolSvg $c="#2a8df0" viewBox="0 0 12 12"><path d="M2 3h8v7H2z" /><path d="M1 1h4v4H1z" fill="#2aa04a" stroke="none" /></ToolSvg>
                <Caret />
              </ToolGroup>
              <ToolGroup $w={73}>
                <ToolSvg $c="#2a8df0" viewBox="0 0 12 12"><path d="M5 1v5l-4 5M5 6l5 5M5 4q5-5 5 1l-5 1" strokeWidth="2" /></ToolSvg>
                <ToolSvg $c="#cfcfcf" viewBox="0 0 12 12"><path d="M6 1v5l-4 5M6 6l4 5M8 4l3-2" strokeWidth="2" /></ToolSvg>
                <ToolSvg $c="#cfcfcf" viewBox="0 0 12 12"><path d="M6 1v5l-4 5M6 6l4 5" strokeWidth="2" /></ToolSvg>
                <ModelButton>1:1<Caret /></ModelButton>
              </ToolGroup>
              <ToolGroup $w={28}>
                <ToolSvg $c="#d8d8d8" viewBox="0 0 12 12"><circle cx="6" cy="6" r="3" strokeWidth="2.500" /><path d="M6 1v2M6 9v2M1 6h2M9 6h2M2 2l2 2M8 8l2 2M10 2L8 4M4 8l-2 2" /></ToolSvg>
                <Caret />
              </ToolGroup>
              <ToolGroup $w={15}>
                <ToolSvg $c="#d8d8d8" viewBox="0 0 12 12"><path d="M6 1v10M1 6h10" /></ToolSvg>
              </ToolGroup>
              <ToolGroup $w={19}>
                <ToolSvg $c="#bcbcbc" viewBox="0 0 12 12"><path d="M1 1h4v4H1zM8 3h3v3H8zM5 11l2-4 3 4zM3 5v4" strokeWidth="1" /></ToolSvg>
              </ToolGroup>
              <ToolGroup $w={19}>
                <ToolSvg $c="#1c7fe0" viewBox="0 0 12 12"><circle cx="6" cy="6" r="5" fill="#0f5fb4" /><path d="M4 6l2 2 3-3" stroke="#0b3f78" /></ToolSvg>
              </ToolGroup>
              <ToolGroup $w={34}>
                <ToolSvg $c="#d8d8d8" viewBox="0 0 12 12"><path d="M1 2h10v8H1z" /><path d="M7 5h2v2M5 7H3V5" strokeWidth="1" /></ToolSvg>
                <ToolSvg $c="#d8d8d8" viewBox="0 0 12 12"><path d="M1 2h10M1 6h10M1 10h10" /></ToolSvg>
              </ToolGroup>
            </StatusTools>
          </StatusBar>

          <ModifyMenu />
          <Pointer viewBox="0 0 34 34">
            <circle cx="17" cy="17" r="15" fill="none" stroke="#f2e33a" strokeWidth="2" />
            <path d="M18 16v10l2-2 2 4 2-1-2-4h3z" fill="#fff" stroke="#333" strokeWidth=".8" />
          </Pointer>
          <Watermark>
            <Recorded>RECORDED WITH</Recorded>
            <Brand>
              SCREENCAST
              <BrandDot viewBox="0 0 16 14"><circle cx="8" cy="7" r="6" fill="#16324f" stroke="#3f8fd6" /><circle cx="8" cy="7" r="3" fill="#58aef2" /></BrandDot>
              MATIC
            </Brand>
          </Watermark>
        </Window>
      </Desktop>
    </>
  );
}
